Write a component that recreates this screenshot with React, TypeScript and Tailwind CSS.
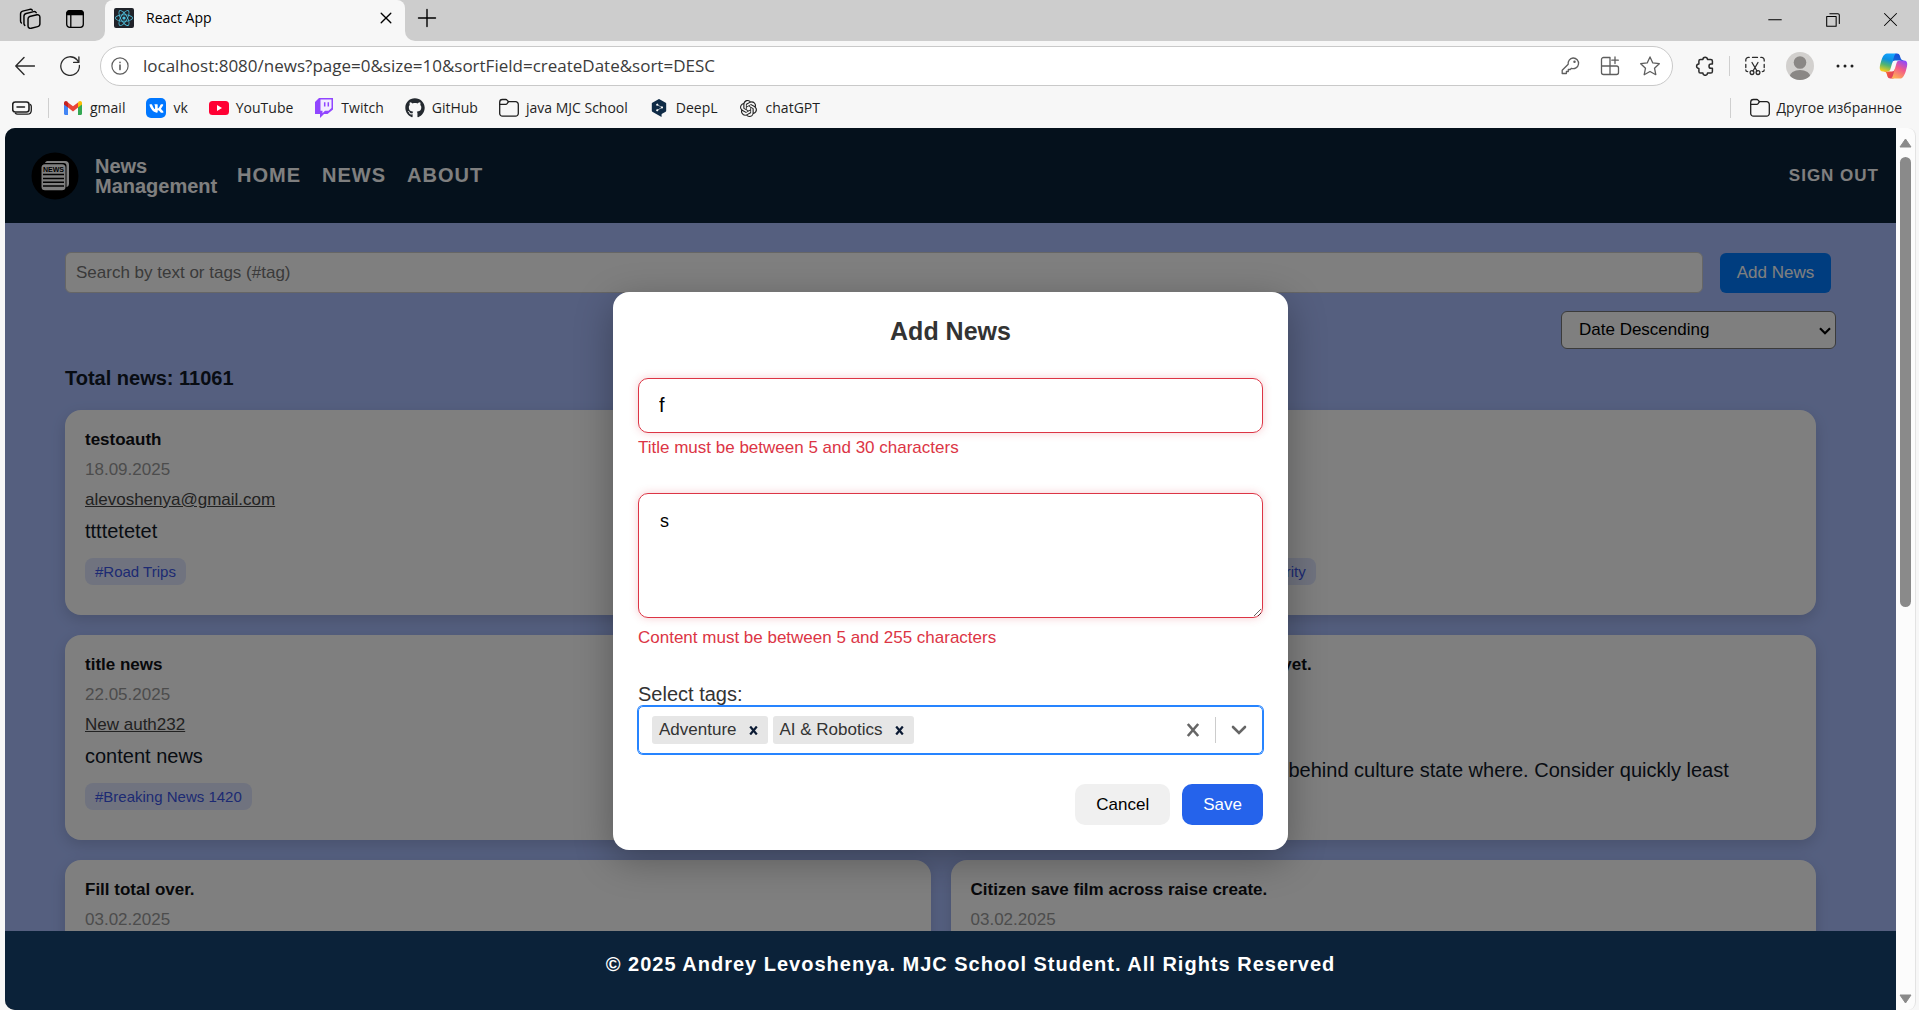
import type { ReactNode } from "react";
import { FaGithub, FaReact, FaVk } from "react-icons/fa";
import { SiDeepl, SiOpenai } from "react-icons/si";

type NewsItem = {
  title: string;
  date: string;
  author?: string;
  content?: string;
  tags?: string[];
};

const news: NewsItem[] = [
  { title: "testoauth", date: "18.09.2025", author: "alevoshenya@gmail.com", content: "ttttetetet", tags: ["Road Trips"] },
  { title: "News", date: "22.05.2025", author: "Author", content: "Content", tags: ["Breaking News", "Movies", "Cybersecurity"] },
  { title: "title news", date: "22.05.2025", author: "New auth232", content: "content news", tags: ["Breaking News 1420"] },
  {
    title: "Area series street exist cold reflect on yet.",
    date: "03.02.2025",
    author: "Author",
    content: "Language ball floor meet law board behind culture state where. Consider quickly least",
  },
  { title: "Fill total over.", date: "03.02.2025" },
  { title: "Citizen save film across raise create.", date: "03.02.2025" },
];

function Line({ children, size = 20, className = "" }: { children: ReactNode; size?: number; className?: string }) {
  return (
    <svg
      width={size}
      height={size}
      viewBox="0 0 20 20"
      fill="none"
      stroke="currentColor"
      strokeWidth="1.3"
      strokeLinecap="round"
      strokeLinejoin="round"
      className={className}
      aria-hidden="true"
    >
      {children}
    </svg>
  );
}

function FolderIcon() {
  return (
    <Line>
      <path d="M.7 15.500V4.200A2.700 2.700 0 0 1 3.400 1.500h3.400c.5 0 1 .2 1.300.6L9.500 3.700h7.100a2.700 2.700 0 0 1 2.700 2.700v9.100a2.700 2.700 0 0 1-2.700 2.700H3.400a2.700 2.700 0 0 1-2.700-2.700z" />
      <path d="M.9 6.300h5.900c.5 0 1-.2 1.300-.6l1.400-2" />
    </Line>
  );
}

function GmailIcon() {
  return (
    <svg width="20" height="20" viewBox="0 0 20 20" aria-hidden="true">
      <path d="M1 4.500v11.200c0 .7.500 1.200 1.200 1.200H5V8.300z" fill="#4285f4" />
      <path d="M19 4.500v11.200c0 .7-.5 1.200-1.200 1.200H15V8.300z" fill="#34a853" />
      <path d="M15 4.600v5l4-3V5c0-1.900-2-2.600-3.300-1.500z" fill="#fbbc04" />
      <path d="M5 9.600v-5l5 3.700 5-3.700v5l-5 3.800z" fill="#ea4335" />
      <path d="M1 5v1.600l4 3v-5L4.300 3.500C3 2.400 1 3.100 1 5z" fill="#c5221f" />
    </svg>
  );
}

function YouTubeIcon() {
  return (
    <svg width="20" height="20" viewBox="0 0 20 20" aria-hidden="true">
      <rect x="0" y="3" width="20" height="14" rx="3.500" fill="#ff0033" />
      <path d="M8 7v6l5-3z" fill="#fff" />
    </svg>
  );
}

function TwitchIcon() {
  return (
    <svg width="20" height="20" viewBox="0 0 20 20" aria-hidden="true">
      <path d="M5 0h14v11.500L13.500 16H10l-4 4v-4H1V4z" fill="#9146ff" />
      <path d="M6.500 1.500h11V10l-3 2.800H11l-2.500 2.400v-2.400h-2z" fill="#f3edff" />
      <path d="M10.700 4.200v4.300M14.300 4.200v4.300" stroke="#9146ff" strokeWidth="1.500" />
    </svg>
  );
}

function VkIcon() {
  return (
    <span className="flex size-5 items-center justify-center rounded-[5px] bg-[#0077ff] text-white">
      <FaVk size={15} />
    </span>
  );
}

function CopilotIcon() {
  return (
    <svg width="31" height="30" viewBox="0 0 48 48" aria-hidden="true">
      <defs>
        <linearGradient id="cpTop" x1="0.8" y1="0" x2="0.3" y2="1">
          <stop offset="0" stopColor="#1b48d8" />
          <stop offset="1" stopColor="#0f6fd8" />
        </linearGradient>
        <linearGradient id="cpBottom" x1="0" y1="0" x2="1" y2="0.6">
          <stop offset="0" stopColor="#ffb657" />
          <stop offset="0.5" stopColor="#f2573c" />
          <stop offset="1" stopColor="#d83b6a" />
        </linearGradient>
        <linearGradient id="cpLeft" x1="0.6" y1="0" x2="0.3" y2="1">
          <stop offset="0" stopColor="#13a3ff" />
          <stop offset="0.35" stopColor="#0d91e1" />
          <stop offset="0.65" stopColor="#52b471" />
          <stop offset="1" stopColor="#f5cf1b" />
        </linearGradient>
        <linearGradient id="cpRight" x1="0.8" y1="0" x2="0.3" y2="1">
          <stop offset="0" stopColor="#8c48ff" />
          <stop offset="0.45" stopColor="#f2598a" />
          <stop offset="1" stopColor="#ffb152" />
        </linearGradient>
      </defs>
      <path fill="url(#cpTop)" d="M34.142 7.325A4.630 4.630 0 0 0 29.700 4H28.350a4.630 4.630 0 0 0-4.554 3.794L21.480 20.407l.575-1.965a4.630 4.630 0 0 1 4.444-3.330h7.853l3.294 1.282 3.175-1.283h-.926a4.630 4.630 0 0 1-4.443-3.325z" />
      <path fill="url(#cpBottom)" d="M14.330 40.656A4.630 4.630 0 0 0 18.779 44h2.870a4.630 4.630 0 0 0 4.629-4.510l.312-12.163-.654 2.233a4.630 4.630 0 0 1-4.443 3.329h-7.919l-2.823-1.532-3.057 1.532h.912a4.630 4.630 0 0 1 4.447 3.344z" />
      <path fill="url(#cpLeft)" d="M29.500 4H13.460c-4.583 0-7.332 6.057-9.165 12.113C2.123 23.290-.72 32.885 7.503 32.885h6.925a4.630 4.630 0 0 0 4.456-3.358 2078 2078 0 0 1 4.971-17.156c.843-2.843 1.544-5.284 2.621-6.805C27.080 4.714 28.086 4 29.500 4" />
      <path fill="url(#cpRight)" d="M18.498 44h16.040c4.582 0 7.332-6.058 9.165-12.115 2.171-7.177 5.013-16.775-3.208-16.775h-6.926a4.630 4.630 0 0 0-4.456 3.358 2084 2084 0 0 1-4.972 17.160c-.842 2.844-1.543 5.285-2.620 6.806-.604.852-1.610 1.566-3.023 1.566" />
    </svg>
  );
}

function TabStrip() {
  return (
    <div className="flex h-[41px] bg-[#f7f7f7] text-black">
      <div className="flex w-[105px] items-center gap-6 rounded-br-[10px] bg-[#cdcdcd] pb-1 pl-[19px]">
        <button type="button" aria-label="Workspaces">
          <Line size={22}>
            <path d="M9.700 7.700l6.600-1.500c1.500-.3 2.700.6 2.700 2.100v6c0 1.300-.8 2.300-2 2.600l-5.900 1.500c-1.600.4-2.900-.6-2.900-2.100v-6.200c0-1.200.5-2.100 1.500-2.400z" />
            <path d="M5.300 15.800c-.5-.4-.8-1-.8-1.800V7.500c0-1.300.8-2.200 2-2.500l6.900-1.700c1-.2 1.900.2 2.300 1" />
            <path d="M2.200 13.600c-.5-.4-.8-1-.8-1.800V5.400c0-1.300.8-2.300 2-2.600l6.500-1.600c.9-.2 1.700.1 2.200.8" />
          </Line>
        </button>
        <button type="button" aria-label="Tab actions">
          <Line size={20}>
            <rect x="1.700" y="1.700" width="16.600" height="16.600" rx="3" />
            <path d="M2 3.500c.3-1 1-1.700 2-1.700h12c1 0 1.700.7 2 1.700V5.500H2z" fill="currentColor" />
            <path d="M5.800 6v12" />
          </Line>
        </button>
      </div>
      <div className="w-[300px] bg-linear-to-b from-[#cdcdcd] from-50% to-[#f7f7f7] to-50%">
        <div className="flex h-full items-center rounded-t-[8px] bg-[#f7f7f7] pb-1.5 pl-[9px] pr-[11px]">
          <span className="flex size-5 items-center justify-center rounded-[2px] bg-[#20232a] text-[#4fc3e0]">
            <FaReact size={18} />
          </span>
          <span className="ml-3 flex-1 text-sm">React App</span>
          <button type="button" aria-label="Close tab">
            <Line size={16}>
              <path d="M4 4l12 12M16 4L4 16" strokeWidth="1.700" />
            </Line>
          </button>
        </div>
      </div>
      <div className="flex flex-1 items-center justify-between rounded-bl-[10px] bg-[#cdcdcd] pb-1.5 pl-3">
        <button type="button" aria-label="New tab">
          <Line size={20}>
            <path d="M10 1.500v17M1.500 10h17" strokeWidth="1.400" />
          </Line>
        </button>
        <div className="flex items-center">
          <button type="button" aria-label="Minimize" className="flex w-[58px] justify-center pt-1">
            <Line size={14}>
              <path d="M1 9.500h18" strokeWidth="1.500" />
            </Line>
          </button>
          <button type="button" aria-label="Restore" className="flex w-[58px] justify-center pt-1">
            <Line size={14}>
              <path d="M1 5h13.500v14H1zM5.500 1h11.500a2 2 0 0 1 2 2v12" strokeWidth="1.500" />
            </Line>
          </button>
          <button type="button" aria-label="Close window" className="flex w-[57px] justify-center pt-1">
            <Line size={15}>
              <path d="M2 2l16 16M18 2L2 18" strokeWidth="1.400" />
            </Line>
          </button>
        </div>
      </div>
    </div>
  );
}

function Toolbar() {
  return (
    <div className="flex h-[49px] items-center pr-[6px] text-[#2b2b2b]">
      <div className="flex w-[100px] items-center gap-[25px] pl-[15px]">
        <button type="button" aria-label="Back">
          <Line>
            <path d="M9 1.500L.8 10 9 18.500M1 10h18.500" strokeWidth="1.400" />
          </Line>
        </button>
        <button type="button" aria-label="Refresh">
          <Line>
            <path d="M19.400 9.500A9.300 9.300 0 1 1 17 3.800l1.800 2.400M18.900 1v5.400h-5.300" />
          </Line>
        </button>
      </div>
      <div className="flex h-10 flex-1 items-center rounded-full border border-[#c9c9c9] bg-white pl-[10px] pr-3 text-[#5e5e5e]">
        <Line size={18}>
          <circle cx="10" cy="10" r="9" />
          <path d="M10 9v5M10 6v.2" strokeWidth="1.800" />
        </Line>
        <input
          type="text"
          aria-label="Address"
          defaultValue="localhost:8080/news?page=0&size=10&sortField=createDate&sort=DESC"
          className="ml-[14px] min-w-0 flex-1 bg-transparent text-[17px] text-[#3b3b3b] outline-none"
        />
        <div className="flex items-center gap-5">
          <button type="button" aria-label="Saved passwords">
            <Line>
              <path d="M13 2a5.300 5.300 0 1 1-1.500 10.300l-1.300 1.200H8.300v2H6.400v2H2.200v-3.300l6-6A5.300 5.300 0 0 1 13 2z" />
              <circle cx="14.500" cy="5.700" r=".6" />
            </Line>
          </button>
          <button type="button" aria-label="Install app">
            <Line>
              <path d="M10 1.500H3.500a2 2 0 0 0-2 2v13a2 2 0 0 0 2 2h13a2 2 0 0 0 2-2v-4.500a2 2 0 0 0-2-2h-15M10 1.500v17M15 1v6.500M11.800 4.200h6.500" />
            </Line>
          </button>
          <button type="button" aria-label="Add to favorites">
            <Line>
              <path d="M10 .9l2.800 6 6.500.8-4.800 4.500 1.300 6.500L10 15.500l-5.800 3.200 1.300-6.500L.7 7.700l6.500-.8z" />
            </Line>
          </button>
        </div>
      </div>
      <button type="button" aria-label="Extensions" className="ml-3 flex w-10 justify-center">
        <Line>
          <path d="M5.500 3.500h2.400a2.300 2.300 0 0 1 4.600 0h3.300a1.600 1.600 0 0 1 1.600 1.600v3h-1.300a2.100 2.100 0 0 0 0 4.200h1.300v3.100a1.600 1.600 0 0 1-1.600 1.600h-3.300a2.300 2.300 0 0 1-4.600 0H5.500a1.600 1.600 0 0 1-1.600-1.600v-2.900a2.300 2.300 0 0 1 0-4.600V5.100a1.600 1.600 0 0 1 1.600-1.600z" strokeWidth="1.500" />
        </Line>
      </button>
      <div className="mx-1 h-5 w-px bg-[#cfcfcf]" />
      <button type="button" aria-label="Screenshot" className="ml-px flex w-10 justify-center">
        <Line>
          <path d="M.8 5V4A2.600 2.600 0 0 1 3.400 1.400h.8M7.500 1.400h5M15.800 1.400h.8A2.600 2.600 0 0 1 19.200 4v1M.8 8.500v3M19.200 8.500v3M.8 14c0 .9.900 1.600 1.900 1.600M19.200 14c0 .9-.9 1.600-1.900 1.600" />
          <path d="M7 6.500l5 8.500M13 6.500L8 15" />
          <circle cx="7" cy="16.600" r="1.900" />
          <circle cx="13" cy="16.600" r="1.900" />
        </Line>
      </button>
      <button type="button" aria-label="Profile" className="ml-[5px] flex w-10 justify-center">
        <svg width="28" height="28" viewBox="0 0 28 28" aria-hidden="true">
          <defs>
            <clipPath id="avatarClip">
              <circle cx="14" cy="14" r="14" />
            </clipPath>
          </defs>
          <g clipPath="url(#avatarClip)">
            <rect width="28" height="28" fill="#d2d0ce" />
            <circle cx="14" cy="10.500" r="6.300" fill="#8a8785" />
            <ellipse cx="14" cy="25" rx="10.500" ry="7" fill="#8a8785" />
          </g>
        </svg>
      </button>
      <button type="button" aria-label="Settings and more" className="ml-[5px] flex w-10 justify-center">
        <svg width="18" height="4" viewBox="0 0 18 4" fill="#1f1f1f" aria-hidden="true">
          <circle cx="2" cy="2" r="1.500" />
          <circle cx="9" cy="2" r="1.500" />
          <circle cx="16" cy="2" r="1.500" />
        </svg>
      </button>
      <button type="button" aria-label="Copilot" className="ml-2 flex w-10 justify-center">
        <CopilotIcon />
      </button>
    </div>
  );
}

function Bookmark({ icon, label }: { icon: ReactNode; label: string }) {
  return (
    <a href="#" className="flex items-center gap-[7px] whitespace-nowrap">
      <span className="flex size-5 items-center justify-center">{icon}</span>
      {label}
    </a>
  );
}

function BookmarksBar() {
  return (
    <div className="flex h-[38px] items-center pb-0.5 pl-3 pr-[17px] text-sm text-[#1f1f1f]">
      <button type="button" aria-label="Reading list">
        <Line>
          <rect x=".7" y="4" width="16.300" height="10" rx="2.500" strokeWidth="1.600" />
          <path d="M5 9h7.500" strokeWidth="1.500" />
          <path d="M18.300 6.500c.7.500 1 1.200 1 2v3.700c0 2.400-1.500 4-4 4H5.500c-1 0-1.700-.3-2.200-1" />
        </Line>
      </button>
      <div className="ml-4 mr-[14px] h-5 w-px bg-[#cfcfcf]" />
      <nav aria-label="Favorites" className="flex items-center gap-[21px]">
        <Bookmark icon={<GmailIcon />} label="gmail" />
        <Bookmark icon={<VkIcon />} label="vk" />
        <Bookmark icon={<YouTubeIcon />} label="YouTube" />
        <Bookmark icon={<TwitchIcon />} label="Twitch" />
        <Bookmark icon={<FaGithub size={20} color="#24292f" />} label="GitHub" />
        <Bookmark icon={<FolderIcon />} label="java MJC School" />
        <Bookmark icon={<SiDeepl size={18} color="#0f2b46" />} label="DeepL" />
        <Bookmark icon={<SiOpenai size={17} color="#1f1f1f" />} label="chatGPT" />
      </nav>
      <div className="ml-auto mr-[19px] h-5 w-px bg-[#cfcfcf]" />
      <Bookmark icon={<FolderIcon />} label="Другое избранное" />
    </div>
  );
}

function NewsLogo() {
  return (
    <svg width="48" height="48" viewBox="0 0 48 48" aria-hidden="true">
      <circle cx="24" cy="24" r="23.500" fill="#000" />
      <path d="M16 9h18a4 4 0 0 1 4 4v19a3.500 3.500 0 0 1-2.500 3.300V14a3 3 0 0 0-3-3H14a3 3 0 0 1 2-2z" fill="#fff" />
      <rect x="10.500" y="12.300" width="24" height="26" rx="3.500" fill="#fff" />
      <text x="22.500" y="20" textAnchor="middle" fontSize="7" fontWeight="bold" fill="#000" fontFamily="Liberation Sans, sans-serif">
        NEWS
      </text>
      <path d="M12 22.500h21M12 26.500h21M12 30.200h21M12 34h21" stroke="#000" strokeWidth="1.600" />
    </svg>
  );
}

function SiteHeader() {
  return (
    <header className="flex h-[95px] shrink-0 items-center bg-[#0b2239] pl-[26px] pr-[17px] font-bold text-white">
      <NewsLogo />
      <a href="#" className="ml-4 w-[122px] text-xl leading-5">
        News Management
      </a>
      <nav className="ml-5 flex gap-[21px] pb-0.5 text-xl tracking-[1px]">
        <a href="#">HOME</a>
        <a href="#">NEWS</a>
        <a href="#">ABOUT</a>
      </nav>
      <button type="button" className="ml-auto text-[17px] tracking-[1px]">
        SIGN OUT
      </button>
    </header>
  );
}

function NewsCard({ item }: { item: NewsItem }) {
  return (
    <article className="flex min-h-[205px] flex-col items-start rounded-2xl bg-white px-5 pb-[30px] pt-5 text-[17px] leading-5 shadow-[0_5px_15px_rgba(0,0,0,0.15)]">
      <h3 className="font-bold text-[#0f1115]">{item.title}</h3>
      <time className="mt-[10px] text-[#999999]">{item.date}</time>
      {item.author && (
        <a href="#" className="mt-[10px] text-[#444444] underline">
          {item.author}
        </a>
      )}
      {item.tags ? (
        <>
          <p className="mt-[10px] text-xl leading-[23px] text-[#111827]">{item.content}</p>
          <ul className="mt-[15px] flex gap-[10px] text-[15px] leading-[27px]">
            {item.tags.map((tag) => (
              <li key={tag} className="rounded-lg bg-[#e0e7ff] px-[10px] text-[#3b55e6]">
                #{tag}
              </li>
            ))}
          </ul>
        </>
      ) : (
        item.content && <p className="flex flex-1 items-center pb-1 text-xl leading-[23px] text-[#111827]">{item.content}</p>
      )}
    </article>
  );
}

function NewsPage() {
  return (
    <main className="min-h-0 flex-1 overflow-hidden bg-[#aabfff] px-[60px] pt-[29px]">
      <div className="flex items-center gap-[17px] pr-[5px]">
        <input
          type="search"
          aria-label="Search news"
          placeholder="Search by text or tags (#tag)"
          className="h-[41px] flex-1 rounded-md border border-[#cccccc] bg-white px-[10px] text-[17px] placeholder:text-[#757575]"
        />
        <button type="button" className="h-10 w-[111px] rounded-md bg-[#007bff] text-[17px] text-white">
          Add News
        </button>
      </div>
      <div className="relative ml-auto mt-[18px] w-[275px]">
        <select aria-label="Sort order" className="h-[38px] w-full appearance-none rounded-md border border-[#767676] bg-white pl-[17px] text-[17px] text-black">
          <option>Date Descending</option>
          <option>Date Ascending</option>
        </select>
        <svg width="12" height="8" viewBox="0 0 12 8" fill="none" stroke="#000" strokeWidth="2.200" className="pointer-events-none absolute right-[5px] top-4" aria-hidden="true">
          <path d="M1 1.200l5 5 5-5" />
        </svg>
      </div>
      <h2 className="mt-[15px] text-xl font-bold leading-7 text-[#111827]">Total news: 11061</h2>
      <div className="mr-5 mt-[18px] grid grid-cols-2 gap-5">
        {news.map((item) => (
          <NewsCard key={item.title} item={item} />
        ))}
      </div>
    </main>
  );
}

function SelectedTag({ label }: { label: string }) {
  return (
    <span className="flex h-7 items-center rounded-[3px] bg-[#e6e6e6] pl-[7px] text-[17px] text-[#333333]">
      {label}
      <button type="button" aria-label={`Remove ${label}`} className="flex w-[31px] justify-center pl-0.5 text-[#0b1a33]">
        <svg width="9" height="9" viewBox="0 0 9 9" stroke="currentColor" strokeWidth="2.200" aria-hidden="true">
          <path d="M1.200 .5l6.600 8M7.800 .5L1.200 8.500" />
        </svg>
      </button>
    </span>
  );
}

function AddNewsDialog() {
  return (
    <div className="absolute inset-0 flex items-center justify-center bg-black/50 pt-1">
      <form role="dialog" aria-labelledby="dialog-title" className="w-[675px] rounded-2xl bg-white p-[25px] shadow-[0_10px_38px_rgba(0,0,0,0.3)]">
        <h2 id="dialog-title" className="text-center text-[25px] font-bold leading-7 text-[#333333]">
          Add News
        </h2>
        <input
          aria-label="Title"
          aria-describedby="title-error"
          defaultValue="f"
          className="mt-[33px] block h-[55px] w-full rounded-[10px] border border-[#dc3545] px-5 text-xl text-black shadow-[0_0_8px_rgba(220,53,69,0.25)] outline-none"
        />
        <p id="title-error" className="mt-[5px] text-[17px] leading-5 text-[#dc3545]">
          Title must be between 5 and 30 characters
        </p>
        <textarea
          aria-label="Content"
          aria-describedby="content-error"
          defaultValue="s"
          className="mt-[35px] block h-[125px] w-full rounded-[10px] border border-[#dc3545] px-[21px] py-[15px] text-lg leading-6 text-black shadow-[0_0_8px_rgba(220,53,69,0.25)] outline-none"
        />
        <p id="content-error" className="mt-[10px] text-[17px] leading-5 text-[#dc3545]">
          Content must be between 5 and 255 characters
        </p>
        <label htmlFor="tags" className="mt-[35px] block text-xl leading-[23px] text-[#333333]">
          Select tags:
        </label>
        <div className="flex h-12 items-center gap-[5px] rounded-[5px] border border-[#2684ff] pl-[13px] pr-[15px] ring-1 ring-[#2684ff]">
          <SelectedTag label="Adventure" />
          <SelectedTag label="AI & Robotics" />
          <input id="tags" className="min-w-0 flex-1 outline-none" />
          <button type="button" aria-label="Clear tags" className="text-[#666666]">
            <svg width="14" height="14" viewBox="0 0 14 14" stroke="currentColor" strokeWidth="2.600" aria-hidden="true">
              <path d="M1.800 1l10.400 12M12.200 1L1.800 13" />
            </svg>
          </button>
          <span className="ml-[10px] h-[26px] w-px bg-[#cccccc]" />
          <button type="button" aria-label="Open tag list" className="ml-[10px] text-[#666666]">
            <svg width="16" height="10" viewBox="0 0 16 10" fill="none" stroke="currentColor" strokeWidth="2.600" strokeLinecap="round" aria-hidden="true">
              <path d="M2 2l6 6 6-6" />
            </svg>
          </button>
        </div>
        <div className="mt-[30px] flex h-[41px] justify-end gap-3 text-[17px]">
          <button type="button" className="rounded-[10px] bg-[#f0f0f0] px-[21px] text-black">
            Cancel
          </button>
          <button type="submit" className="rounded-[10px] bg-[#2563eb] px-[21px] text-white">
            Save
          </button>
        </div>
      </form>
    </div>
  );
}

function Scrollbar() {
  return (
    <div className="mr-[3px] flex w-5 flex-col items-center rounded-r-[8px] border-r border-[#e3e3e3] bg-[#fcfcfc] pb-1.5 pt-[10px]">
      <svg width="13" height="10" viewBox="0 0 13 10" fill="#8a8a8a" stroke="#8a8a8a" strokeLinejoin="round" aria-hidden="true">
        <path d="M6.500 1L12 9H1z" />
      </svg>
      <div className="mb-1 mt-[9px] w-full flex-1">
        <div className="mx-auto h-[54%] w-[11px] rounded-full bg-[#8a8a8a]" />
      </div>
      <svg width="13" height="10" viewBox="0 0 13 10" fill="#8a8a8a" stroke="#8a8a8a" strokeLinejoin="round" aria-hidden="true">
        <path d="M6.500 9L12 1H1z" />
      </svg>
    </div>
  );
}

export default function App() {
  return (
    <div className="flex h-screen flex-col overflow-hidden bg-[#f7f7f7]">
      <div className="font-['Open_Sans','Noto_Sans',sans-serif]">
        <TabStrip />
        <Toolbar />
        <BookmarksBar />
      </div>
      <div className="flex min-h-0 flex-1 pl-[5px] font-['Liberation_Sans',Arial,sans-serif]">
        <div className="relative flex min-w-0 flex-1 flex-col overflow-hidden rounded-l-[10px]">
          <SiteHeader />
          <NewsPage />
          <AddNewsDialog />
          <footer className="relative h-[79px] shrink-0 bg-[#0b2239] pl-10 pt-[19px] text-center text-xl font-bold tracking-[1px] text-white">
            © 2025 Andrey Levoshenya. MJC School Student. All Rights Reserved
          </footer>
        </div>
        <Scrollbar />
      </div>
    </div>
  );
}
